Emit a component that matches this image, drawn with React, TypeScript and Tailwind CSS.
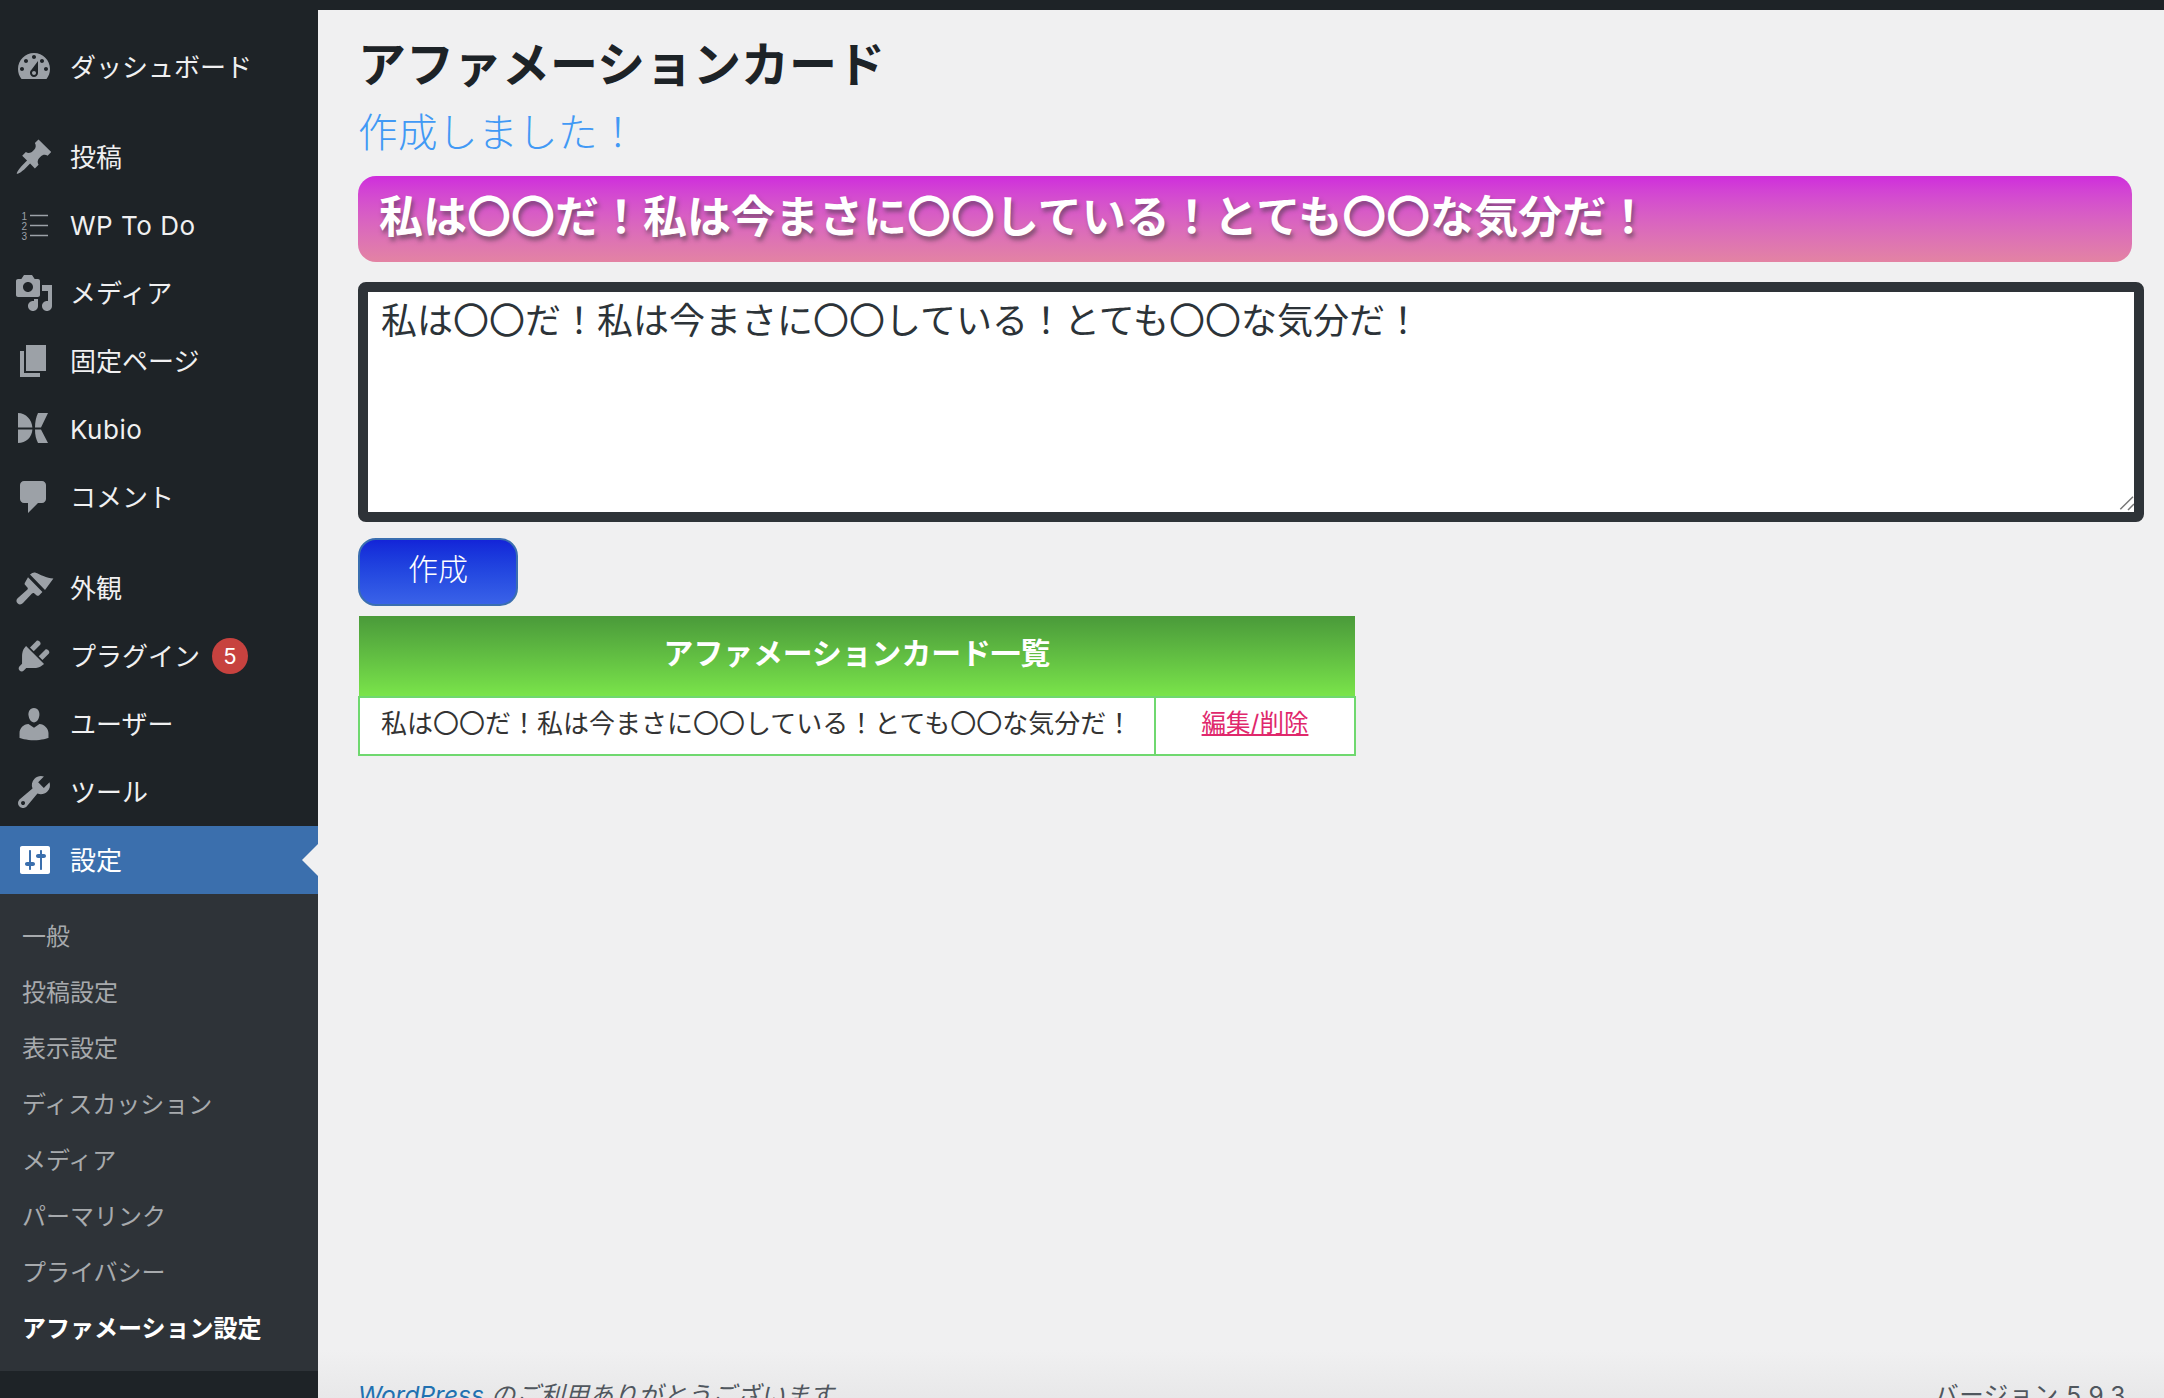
const icons: Record<string, string> = {
  dashboard: "M3.76 16h12.48c1.1-1.37 1.76-3.11 1.76-5 0-4.42-3.58-8-8-8s-8 3.58-8 8c0 1.89.66 3.63 1.76 5zM10 4c.55 0 1 .45 1 1s-.45 1-1 1-1-.45-1-1 .45-1 1-1zM6 6c.55 0 1 .45 1 1s-.45 1-1 1-1-.45-1-1 .45-1 1-1zm8 0c.55 0 1 .45 1 1s-.45 1-1 1-1-.45-1-1 .45-1 1-1zm-5.37 5.55L12 7v6c0 1.1-.9 2-2 2s-2-.9-2-2c0-.57.24-1.08.63-1.45zM4 10c.55 0 1 .45 1 1s-.45 1-1 1-1-.45-1-1 .45-1 1-1zm12 0c.55 0 1 .45 1 1s-.45 1-1 1-1-.45-1-1 .45-1 1-1zm-5 3c0-.55-.45-1-1-1s-1 .45-1 1 .45 1 1 1 1-.45 1-1z",
  pin: "M10.44 3.02l1.82-1.82 6.36 6.35-1.83 1.82c-1.05-.68-2.48-.57-3.41.36l-.75.75c-.92.93-1.04 2.35-.35 3.41l-1.83 1.82-2.41-2.41-2.8 2.79c-.42.42-3.38 2.71-3.8 2.29s1.86-3.39 2.28-3.81l2.79-2.79L4.1 9.36l1.83-1.82c1.05.69 2.48.57 3.4-.36l.75-.75c.93-.92 1.05-2.35.36-3.41z",
  media: "M13 11V4c0-.55-.45-1-1-1h-1.67L9 1H5L3.67 3H2c-.55 0-1 .45-1 1v7c0 .55.45 1 1 1h10c.55 0 1-.45 1-1zM7 4.5c1.38 0 2.5 1.12 2.5 2.5S8.38 9.5 7 9.5 4.5 8.38 4.5 7 5.62 4.5 7 4.5zM14 6h5v10.5c0 1.38-1.12 2.5-2.5 2.5S14 17.88 14 16.5s1.12-2.5 2.5-2.5c.17 0 .34.02.5.05V9h-3V6zm-4 8.05V13h2v3.5c0 1.38-1.12 2.5-2.5 2.5S7 17.88 7 16.5 8.12 14 9.5 14c.17 0 .34.02.5.05z",
  page: "M6 15V2h10v13H6zm-1 1h8v2H3V5h2v11z",
  kubio: "M2 2C6 2 9 5.5 9.2 9.2H2ZM12 2H17L13.5 9.2H10.5C10.5 6.5 11 4 12 2ZM2 10.2H9.2C9 14 6 17 2 17ZM10.5 10.2H13.5L17 17H12C11 15 10.5 13 10.5 10.2Z",
  comments: "M5 2h9c1.1 0 2 .9 2 2v7c0 1.1-.9 2-2 2h-2l-5 5v-5H5c-1.1 0-2-.9-2-2V4c0-1.1.9-2 2-2z",
  appearance: "M8 3.2C9 2.4 10 2 10.5 2.3C12 2.7 13.2 3.6 14.7 4C16.3 4.6 18 5.2 19.7 5.3L15.5 11ZM7 4.6L14.2 12L12.6 13.6C12.2 14 11.6 14 11.2 13.6L10.2 12.7C9.8 12.3 9.3 12.4 9 12.8L4.5 17.5C3.8 18.3 2.7 18.5 1.9 17.8C1 17 1 15.9 1.8 15.1L6.6 10.9C7 10.6 7 10 6.7 9.7L5.6 8.5C5.2 8.1 5.2 7.5 5.6 7.1Z",
  plugins: "M13.11 4.36L9.87 7.6 8 5.73l3.24-3.24c.35-.34 1.05-.2 1.56.32.52.51.66 1.21.31 1.55zm-8 1.77l.91-1.12 9.01 9.01-1.19.84c-.71.71-2.63 1.16-3.82 1.16H6.14L4.9 17.26c-.59.59-1.54.59-2.12 0-.59-.58-.59-1.53 0-2.12l1.24-1.24v-3.88c0-1.13.4-3.19 1.09-3.89zm7.26 3.97l3.24-3.24c.34-.35 1.04-.21 1.55.31.52.51.66 1.21.31 1.55l-3.24 3.25z",
  users: "M10 9.25c-2.27 0-2.73-3.44-2.73-3.44C7 4.02 7.82 2 9.97 2c2.16 0 2.98 2.02 2.71 3.81 0 0-.41 3.44-2.68 3.44zm0 2.57L12.72 10c2.39 0 4.52 2.33 4.52 4.53v2.49s-3.65 1.13-7.24 1.13c-3.65 0-7.24-1.13-7.24-1.13v-2.49c0-2.25 1.94-4.48 4.47-4.48z",
  tools: "M16.68 9.77c-1.34 1.34-3.3 1.67-4.95.99l-5.41 6.52c-.99.99-2.59.99-3.58 0s-.99-2.59 0-3.57l6.52-5.42c-.68-1.65-.35-3.61.99-4.95 1.28-1.28 3.12-1.62 4.72-1.06l-2.89 2.89 2.82 2.82 2.86-2.87c.53 1.58.18 3.39-1.08 4.65zM3.81 16.21c.4.39 1.04.39 1.43 0 .4-.4.4-1.04 0-1.43-.39-.4-1.03-.4-1.43 0-.39.39-.39 1.03 0 1.43z",
  settings: "M18 16V4c0-.55-.45-1-1-1H4c-.55 0-1 .45-1 1v12c0 .55.45 1 1 1h13c.55 0 1-.45 1-1zM8.5 11h1c.55 0 1 .45 1 1s-.45 1-1 1h-1v1.5c0 .28-.22.5-.5.5s-.5-.22-.5-.5V13h-1c-.55 0-1-.45-1-1s.45-1 1-1h1V5.5c0-.28.22-.5.5-.5s.5.22.5.5V11zm4.5-2h-1c-.55 0-1-.45-1-1s.45-1 1-1h1V5.5c0-.28.22-.5.5-.5s.5.22.5.5V7h1c.55 0 1 .45 1 1s-.45 1-1 1h-1v5.5c0 .28-.22.5-.5.5s-.5-.22-.5-.5V9z",
};

const Icon = ({ name, active }: { name: string; active?: boolean }) => (
  <svg viewBox="0 0 20 20" className={`w-10 h-10 shrink-0 ${active ? "text-white" : "text-[#9ca1a7]"}`} fill="currentColor" fillRule="evenodd">
    <path d={icons[name]} />
  </svg>
);

const TodoIcon = () => (
  <svg viewBox="0 0 40 40" className="w-10 h-10 shrink-0 text-[#9ca1a7]">
    <text x="7.5" y="14.5" fontSize="10" fill="currentColor" fontFamily="Liberation Sans, sans-serif">1</text>
    <text x="7.5" y="24.5" fontSize="10" fill="currentColor" fontFamily="Liberation Sans, sans-serif">2</text>
    <text x="7.5" y="34.5" fontSize="10" fill="currentColor" fontFamily="Liberation Sans, sans-serif">3</text>
    <path d="M16 10.5h18M16 20.5h18M16 30.5h18" stroke="currentColor" strokeWidth="1.5" />
  </svg>
);

const MenuItem = ({ icon, label, badge, active, latin, className = "" }: { icon: string; label: string; badge?: string; active?: boolean; latin?: boolean; className?: string }) => (
  <li className={`relative h-[68px] flex items-center pl-[14px] ${active ? "bg-[#3b6fad] text-white" : "text-[#f0f0f1]"} ${className}`}>
    {icon === "todo" ? <TodoIcon /> : <Icon name={icon} active={active} />}
    <span className={`ml-[16px] pt-[2px] text-[26px] leading-[34px] whitespace-nowrap ${latin ? "tracking-[0.5px]" : ""}`}>{label}</span>
    {badge && (
      <span className="ml-[12px] w-9 h-9 rounded-full bg-[#c7423f] text-white text-[22px] leading-9 text-center">{badge}</span>
    )}
    {active && <span className="absolute right-0 top-[18px] border-y-[16px] border-r-[16px] border-y-transparent border-r-[#f0f0f1]" />}
  </li>
);

const submenu = ["一般", "投稿設定", "表示設定", "ディスカッション", "メディア", "パーマリンク", "プライバシー"];

export default function App() {
  return (
    <div className="h-screen overflow-hidden flex flex-col bg-[#f0f0f1] font-['Inter','Noto_Sans_CJK_JP',sans-serif]">
      <div className="h-[10px] shrink-0 bg-[#1e2327]" />
      <div className="flex flex-1 min-h-0">
        <aside className="w-[318px] shrink-0 bg-[#1e2327] pt-[23px]">
          <ul>
            <MenuItem icon="dashboard" label="ダッシュボード" />
            <MenuItem icon="pin" label="投稿" className="mt-[22px]" />
            <MenuItem icon="todo" label="WP To Do" latin />
            <MenuItem icon="media" label="メディア" />
            <MenuItem icon="page" label="固定ページ" />
            <MenuItem icon="kubio" label="Kubio" latin />
            <MenuItem icon="comments" label="コメント" />
            <MenuItem icon="appearance" label="外観" className="mt-[23px]" />
            <MenuItem icon="plugins" label="プラグイン" badge="5" />
            <MenuItem icon="users" label="ユーザー" />
            <MenuItem icon="tools" label="ツール" />
            <MenuItem icon="settings" label="設定" active />
          </ul>
          <ul className="bg-[#2e3338] pt-[14px] pb-[15px] text-[#a7aaad] text-[24px]">
            {submenu.map((s) => (
              <li key={s} className="h-[56px] flex items-center pl-[22px] pt-[2px] whitespace-nowrap">{s}</li>
            ))}
            <li className="h-[56px] flex items-center pl-[22px] pt-[2px] whitespace-nowrap text-white font-bold">アファメーション設定</li>
          </ul>
        </aside>

        <main className="flex-1 min-w-0 flex flex-col">
          <div className="flex-1 min-h-0 pl-[40px] pr-[20px]">
            <h1 className="pt-[25px] text-[48px] leading-[60px] font-semibold text-[#1d2327] whitespace-nowrap">アファメーションカード</h1>
            <p className="mt-[16px] text-[39.5px] leading-[44px] tracking-[0.5px] font-light text-[#4199f5]">作成しました！</p>
            <div className="mt-[21px] mr-[12px] h-[86px] rounded-[18px] bg-linear-to-b from-[#cf2cdc] to-[#e383a3] flex items-center pl-[21px] pb-[4px]">
              <span className="text-[44px] font-bold text-white whitespace-nowrap [text-shadow:2px_4px_4px_rgba(60,60,60,0.55)]">私は〇〇だ！私は今まさに〇〇している！とても〇〇な気分だ！</span>
            </div>
            <div className="relative mt-[20px] w-[1786px] h-[240px]">
              <textarea
                readOnly
                defaultValue="私は〇〇だ！私は今まさに〇〇している！とても〇〇な気分だ！"
                className="block w-full h-full border-[10px] border-[#2e3338] rounded-[8px] bg-white pl-[13px] pt-[7px] text-[36px] leading-[44px] text-[#2c3338] outline-none resize-none"
              />
              <svg viewBox="0 0 16 16" className="absolute right-[10px] bottom-[10px] w-4 h-4 text-[#777]" stroke="currentColor" strokeWidth="1.5" fill="none">
                <path d="M2.3 13.3L15 .7M10 14l6-6" />
              </svg>
            </div>
            <button className="block mt-[16px] w-[160px] h-[68px] pb-[6px] rounded-[18px] border-2 border-[#3a6eb0] bg-linear-to-b from-[#1424d8] to-[#3a62e8] text-white text-[30px] font-light">作成</button>
            <table className="mt-[10px] w-[998px] table-fixed border-collapse">
              <colgroup>
                <col className="w-[796px]" />
                <col />
              </colgroup>
              <thead>
                <tr>
                  <th colSpan={2} className="h-[81px] p-0 pb-[6px] bg-linear-to-b from-[#4a9a3a] to-[#7ae44a] text-white text-[29.8px] font-bold">アファメーションカード一覧</th>
                </tr>
              </thead>
              <tbody>
                <tr className="h-[58px] bg-white">
                  <td className="border-2 border-[#6fd86f] pl-[21px] pb-[6px] text-[26px] text-[#333] whitespace-nowrap">私は〇〇だ！私は今まさに〇〇している！とても〇〇な気分だ！</td>
                  <td className="border-2 border-[#6fd86f] pb-[6px] text-center">
                    <a href="#" className="text-[24.5px] text-[#e0286c] underline">編集/削除</a>
                  </td>
                </tr>
              </tbody>
            </table>
          </div>
          <footer className="h-[48px] shrink-0 overflow-hidden pt-[28px] pl-[40px] pr-[38px] flex justify-between text-[24.5px] leading-[34px] text-[#50575e] bg-linear-to-b from-[#f0f0f1] to-[#e8e8e9]">
            <span className="italic"><a href="#" className="text-[#2271b1]">WordPress</a> のご利用ありがとうございます。</span>
            <span className="tracking-[0.5px]">バージョン 5.9.3</span>
          </footer>
        </main>
      </div>
    </div>
  );
}
